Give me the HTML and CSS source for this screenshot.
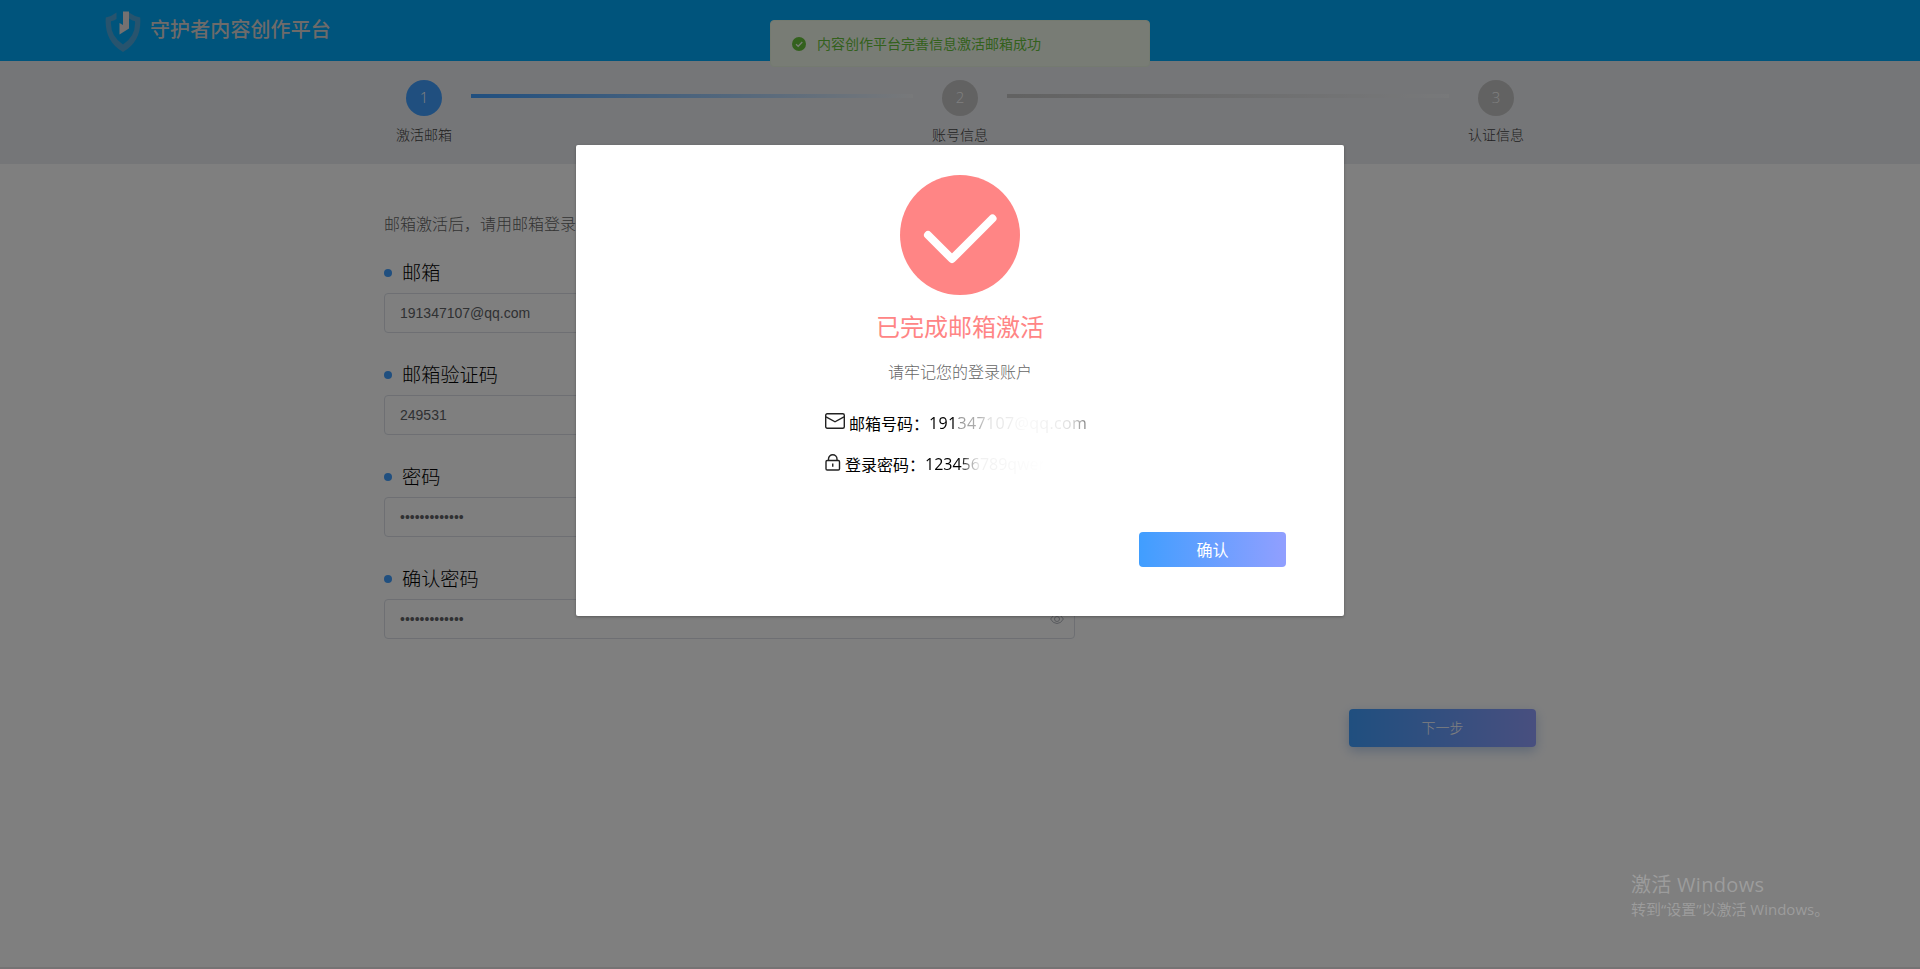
FILE: index.html
```html
<!DOCTYPE html>
<html lang="zh-CN">
<head>
<meta charset="utf-8">
<title>守护者内容创作平台</title>
<link rel="stylesheet" href="styles.css">
</head>
<body>
<div class="page">
  <header class="header">
    <svg class="logo" width="36" height="42" viewBox="0 0 36 42">
      <path d="M11.500 1.500Q6.500 5.500 .8 6.500Q-1 30 18 41Q37 30 35.200 6.500Q29.500 5.500 24 1.500V7.500Q27 9.700 30 10.200Q31 25 18 33.500Q5 25 6 10.200Q9 9.700 11.500 8Z" fill="#50a8dc"/>
      <path d="M18 0.500H24V17.500L14.500 23.500V12L18 14Z" fill="#e8e2e2"/>
    </svg>
    <span class="brand">守护者内容创作平台</span>
  </header>
  <nav class="steps">
    <div class="step"><span class="num active">1</span><span class="step-name">激活邮箱</span></div>
    <i class="line line-active"></i>
    <div class="step"><span class="num">2</span><span class="step-name">账号信息</span></div>
    <i class="line"></i>
    <div class="step"><span class="num">3</span><span class="step-name">认证信息</span></div>
  </nav>
  <main class="main">
    <p class="hint">邮箱激活后，请用邮箱登录</p>
    <div class="field"><div class="label">邮箱</div><div class="input">191347107@qq.com</div></div>
    <div class="field"><div class="label">邮箱验证码</div><div class="input">249531</div></div>
    <div class="field"><div class="label">密码</div><div class="input">•••••••••••••</div></div>
    <div class="field"><div class="label">确认密码</div><div class="input">•••••••••••••
      <svg class="eye" width="14" height="12" viewBox="0 0 14 12" fill="none" stroke="#b0b4bc"><path d="M.6 6Q3 1.500 7 1.500T13.400 6Q11 10.500 7 10.500T.6 6Z"/><circle cx="7" cy="6" r="2.500"/></svg></div></div>
    <div class="actions"><button class="next">下一步</button></div>
  </main>
</div>
<div class="message">
  <svg width="14" height="14" viewBox="0 0 14 14"><circle cx="7" cy="7" r="7" fill="#67c23a"/><path d="M4 7.200L6.200 9.300L10.300 5" fill="none" stroke="#f0f9eb" stroke-width="1.300"/></svg>
  <span class="message-text">内容创作平台完善信息激活邮箱成功</span>
</div>
<div class="mask"></div>
<section class="dialog">
  <svg class="done" width="120" height="120" viewBox="0 0 120 120"><circle cx="60" cy="60" r="60" fill="#ff8585"/><path d="M28 60L52 84L92.500 43.500" fill="none" stroke="#fff" stroke-width="8" stroke-linecap="round" stroke-linejoin="round"/></svg>
  <h1 class="title">已完成邮箱激活</h1>
  <p class="sub">请牢记您的登录账户</p>
  <div class="account">
    <div class="row">
      <svg width="20" height="16" viewBox="0 0 20 16" fill="none" stroke="#222" stroke-width="1.400"><rect x=".7" y=".7" width="18.600" height="14.600" rx="1.500"/><path d="M1 3.800L10 8.800L19 3.800"/></svg>
      <span>邮箱号码：</span><span class="val fade-mail">191347107@qq.com</span>
    </div>
    <div class="row">
      <svg width="16" height="17" viewBox="0 0 16 17" fill="none" stroke="#222" stroke-width="1.400"><rect x="1" y="6.500" width="13.500" height="9.500" rx="1.200"/><path d="M3.500 6.500V5A4.250 4.250 0 0 1 12 5V6.500M7.750 9.500V12.800"/></svg>
      <span>登录密码：</span><span class="val fade-pass">123456789qwer</span>
    </div>
  </div>
  <button class="confirm">确认</button>
</section>
<aside class="watermark"><div class="wm-title">激活 Windows</div><div class="wm-text">转到“设置”以激活 Windows。</div></aside>
</body>
</html>
```
FILE: styles.css
```css
* { box-sizing: border-box; }
body {
  margin: 0;
  height: 969px;
  overflow: hidden;
  font-family: "Open Sans", "Noto Sans CJK SC", sans-serif;
  font-weight: 300;
  color: #000;
}
p, h1 { margin: 0; font-weight: inherit; }
button { border: 0; padding: 0 0 2px; font: inherit; color: #fff; }
.page { height: 969px; border-bottom: 2px solid #eae6e9; background: #fff; }
.header {
  display: flex;
  align-items: flex-start;
  height: 61px;
  padding: 11px 0 0 105px;
  background: #00a9f8;
}
.brand {
  margin-left: 9px;
  font-size: 20px;
  line-height: 38px;
  letter-spacing: .1px;
  font-weight: 500;
  color: #dcd6d4;
}
.steps {
  display: flex;
  align-items: flex-start;
  height: 103px;
  padding: 19px 384px 0;
  background: #ebedf0;
}
.step { display: flex; flex-direction: column; align-items: center; width: 80px; }
.num {
  width: 36px;
  height: 36px;
  border-radius: 50%;
  background: #c4c4c4;
  color: #fff;
  text-align: center;
  font-size: 15px;
  line-height: 35px;
}
.num.active { background: #409eff; }
.step-name { margin-top: 9px; font-size: 14px; line-height: 20px; color: #444; }
.line {
  flex: 1;
  height: 4px;
  margin: 14px 7px 0;
  background: linear-gradient(90deg, #c4c4c4, #f0f2f5);
}
.line-active { background: linear-gradient(90deg, #409eff, #f0f2f5); }
.main { width: 1152px; margin: 0 auto; padding-top: 48px; }
.hint { height: 48px; font-size: 16px; line-height: 25px; color: #666; }
.field { width: 691px; height: 102px; }
.label {
  display: flex;
  align-items: center;
  gap: 10px;
  height: 33px;
  padding-bottom: 8px;
  font-size: 19.2px;
  line-height: 25px;
}
.label::before { content: ""; width: 8px; height: 8px; border-radius: 50%; background: #409eff; }
.input {
  display: flex;
  align-items: center;
  height: 40px;
  padding: 0 10px 1px 15px;
  border: 1px solid #dcdfe6;
  border-radius: 4px;
  font-family: "Liberation Sans", sans-serif;
  font-weight: 400;
  font-size: 14px;
  color: #606266;
}
.eye { margin-left: auto; }
.actions { display: flex; justify-content: flex-end; padding-top: 41px; }
.next {
  width: 187px;
  height: 38px;
  border-radius: 4px;
  font-size: 14px;
  background: linear-gradient(90deg, #409eff, #919fff);
  box-shadow: 0 4px 12px rgba(64, 120, 200, .35);
}
.message {
  position: absolute;
  left: 770px;
  top: 20px;
  display: flex;
  align-items: center;
  gap: 11px;
  width: 380px;
  height: 47px;
  padding-left: 21px;
  border: 1px solid #e8f5e0;
  border-radius: 4px;
  background: #f0f9eb;
  color: #67c23a;
  font-size: 14px;
}
.message-text { padding-bottom: 2px; font-weight: 400; }
.mask { position: absolute; inset: 0; background: rgba(0, 0, 0, .5); }
.dialog {
  position: absolute;
  left: 576px;
  top: 145px;
  display: flex;
  flex-direction: column;
  align-items: center;
  width: 768px;
  height: 471px;
  padding-top: 30px;
  border-radius: 2px;
  background: #fff;
  box-shadow: 0 1px 3px rgba(0, 0, 0, .3);
}
.title { margin-top: 15px; font-size: 24px; line-height: 34px; font-weight: 400; color: #ff8585; }
.sub { margin-top: 16px; font-size: 16px; line-height: 24px; color: #666; }
.account { width: 270px; margin: 18px 0 0; }
.row { display: flex; align-items: center; height: 41px; font-size: 16px; font-weight: 400; }
.row svg { margin: -3px 4px 0 0; }
.val { white-space: nowrap; }
.fade-mail {
  letter-spacing: .35px;
  mask-image: linear-gradient(90deg, #000 17%, rgba(0,0,0,.4) 20%, rgba(0,0,0,.3) 32%, rgba(0,0,0,.12) 38%, rgba(0,0,0,.08) 50%, rgba(0,0,0,.02) 60%, rgba(0,0,0,.08) 82%, rgba(0,0,0,.15) 90%, rgba(0,0,0,.5));
}
.fade-pass { mask-image: linear-gradient(90deg, #000 30%, rgba(0,0,0,.35) 38%, rgba(0,0,0,.06) 46%, rgba(0,0,0,.02) 80%, transparent); }
.confirm {
  width: 147px;
  height: 35px;
  margin: 48px 58px 0 auto;
  border-radius: 4px;
  font-size: 16px;
  font-weight: 400;
  background: linear-gradient(90deg, #409eff, #919fff);
}
.watermark { position: absolute; left: 1631px; top: 871px; color: #9c9c9c; font-weight: 400; }
.wm-title { font-size: 20px; line-height: 28px; letter-spacing: .3px; }
.wm-text { font-size: 15px; line-height: 20px; }
```
